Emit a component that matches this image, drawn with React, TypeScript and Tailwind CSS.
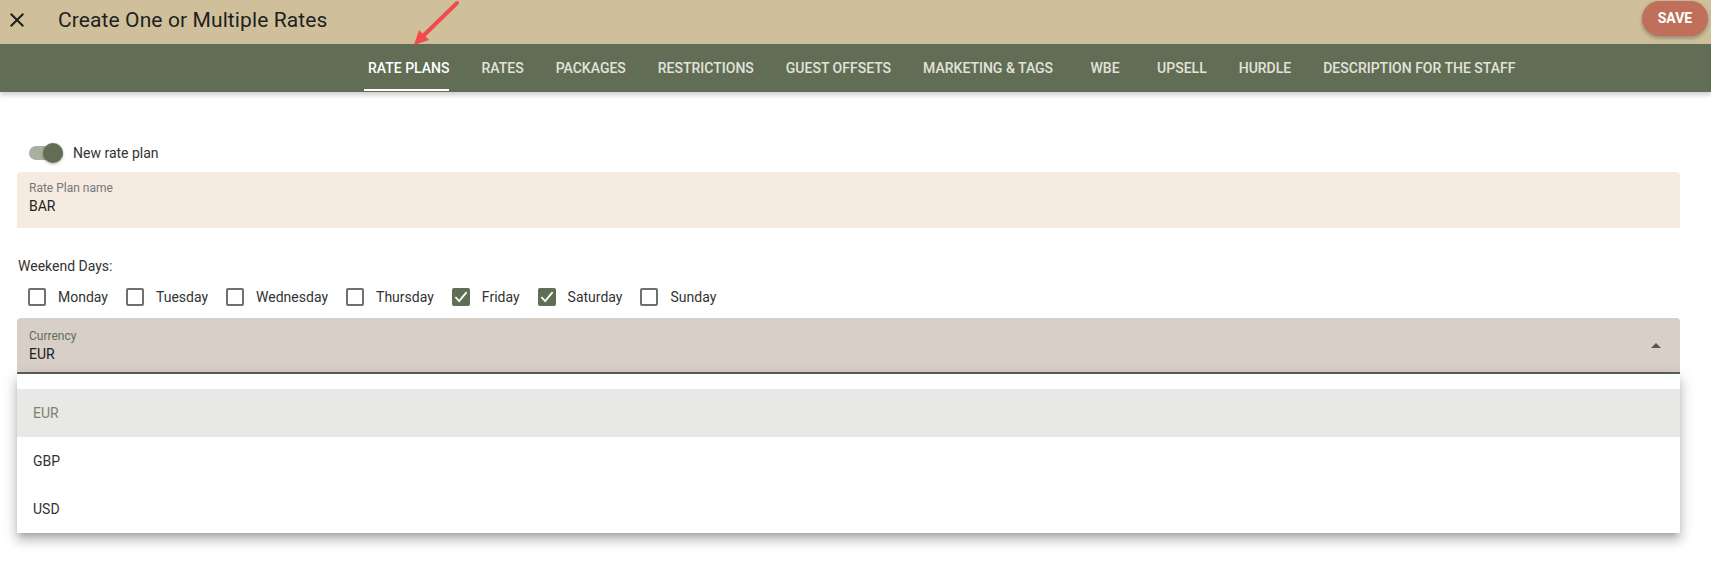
import React from "react";

const tabs = [
  "Rate Plans",
  "Rates",
  "Packages",
  "Restrictions",
  "Guest Offsets",
  "Marketing & Tags",
  "WBE",
  "Upsell",
  "Hurdle",
  "Description for the staff",
];

const days = [
  { name: "Monday", checked: false },
  { name: "Tuesday", checked: false },
  { name: "Wednesday", checked: false },
  { name: "Thursday", checked: false },
  { name: "Friday", checked: true },
  { name: "Saturday", checked: true },
  { name: "Sunday", checked: false },
];

const currencies = ["EUR", "GBP", "USD"];

function CloseIcon() {
  return (
    <svg viewBox="0 0 24 24" className="w-6 h-6 fill-[#1f1f1f]">
      <path d="M19 6.41 17.59 5 12 10.59 6.41 5 5 6.41 10.59 12 5 17.59 6.41 19 12 13.41 17.59 19 19 17.59 13.41 12z" />
    </svg>
  );
}

function Checkbox({ checked }: { checked: boolean }) {
  if (checked) {
    return (
      <span className="flex items-center justify-center w-[18px] h-[18px] rounded-[2px] bg-[#616e55]">
        <svg viewBox="0 0 24 24" className="w-[18px] h-[18px] fill-none stroke-white stroke-[2.4]">
          <path d="M4.5 12 9.5 17.5 19.5 5.5" />
        </svg>
      </span>
    );
  }
  return <span className="block w-[18px] h-[18px] rounded-[2px] border-2 border-[#6f6f6f]" />;
}

export default function App() {
  return (
    <div className="relative min-h-[564px] bg-white font-['Roboto','Noto_Sans',sans-serif] text-[#333]">
      {/* header */}
      <div className="flex items-center h-[44px] pb-[4px] bg-[#cfc09b]">
        <div className="ml-[5px]">
          <CloseIcon />
        </div>
        <h1 className="ml-[29px] text-[21px] leading-[24px] tracking-[0.005em] text-[#1f1f1f]">
          Create One or Multiple Rates
        </h1>
        <button className="self-start mt-[1px] ml-auto mr-[3px] h-[35px] w-[66px] rounded-full bg-[#c0705a] text-white text-[14px] font-bold shadow-[0_2px_4px_rgba(0,0,0,0.3)]">
          SAVE
        </button>
      </div>

      {/* tabs */}
      <nav className="relative z-10 flex h-[48px] pl-[352px] bg-[#616e55] shadow-[0_3px_5px_rgba(0,0,0,0.2)]">
        {tabs.map((t, i) => (
          <div
            key={t}
            className={`relative flex items-center justify-center min-w-[72px] px-4 text-[14px] font-medium uppercase ${
              i === 0 ? "text-white" : "text-[#e2e2dc]"
            }`}
          >
            {t}
            {i === 0 && <span className="absolute left-[12px] right-[16px] bottom-[1px] h-[2px] bg-white" />}
          </div>
        ))}
      </nav>

      {/* form */}
      <div className="pl-[17px] pr-[31px] pt-[41px]">
        <div className="flex items-center h-[39px]">
          <div className="relative ml-[12px] w-[34px] h-[14px] rounded-full bg-[#a9b0a0]">
            <span className="absolute right-0 top-[-3px] w-[20px] h-[20px] rounded-full bg-[#616e55] shadow-[0_1px_3px_rgba(0,0,0,0.35)]" />
          </div>
          <span className="ml-[10px] text-[14px] leading-[20px]">New rate plan</span>
        </div>

        <div className="h-[56px] rounded-t-[4px] bg-[#f5ebe1] px-[12px] pt-[8px]">
          <div className="text-[12px] leading-[16px] text-[#777]">Rate Plan name</div>
          <div className="text-[14px] leading-[20px] text-[#222]">BAR</div>
        </div>

        <div className="mt-[28px] text-[14px] leading-[20px] ml-[1px]">Weekend Days:</div>

        <div className="flex items-center h-[20px] mt-[11px] ml-[11px] gap-[18px]">
          {days.map((d) => (
            <label key={d.name} className="flex items-center gap-[12px]">
              <Checkbox checked={d.checked} />
              <span className="text-[14px] leading-[20px]">{d.name}</span>
            </label>
          ))}
        </div>

        <div className="mt-[11px] flex items-center justify-between h-[56px] rounded-t-[4px] bg-[#d8cfc9] border-b-2 border-[#5a6450] pl-[12px] pr-[19px]">
          <div className="pt-[1px]">
            <div className="text-[12px] leading-[16px] text-[#616e55]">Currency</div>
            <div className="text-[14px] leading-[20px] text-[#222]">EUR</div>
          </div>
          <span className="w-0 h-0 border-l-[5px] border-r-[5px] border-b-[5px] border-l-transparent border-r-transparent border-b-[#555]" />
        </div>

        <ul className="pt-[15px] bg-white shadow-[0_5px_6px_-3px_rgba(0,0,0,0.2),0_8px_10px_1px_rgba(0,0,0,0.14),0_3px_14px_2px_rgba(0,0,0,0.12)]">
          {currencies.map((c, i) => (
            <li
              key={c}
              className={`flex items-center h-[48px] px-[16px] text-[14px] ${
                i === 0 ? "bg-[#e8e8e6] text-[#7c8270]" : "text-[#333]"
              }`}
            >
              {c}
            </li>
          ))}
        </ul>
      </div>

      {/* annotation arrow */}
      <svg className="absolute left-[400px] top-0 w-[70px] h-[52px] z-20" viewBox="0 0 70 52">
        <path d="M57 3 21 38" stroke="#f04a4a" strokeWidth="4" strokeLinecap="round" fill="none" />
        <path d="M14 45 19 30 29 40z" fill="#f04a4a" />
      </svg>
    </div>
  );
}
